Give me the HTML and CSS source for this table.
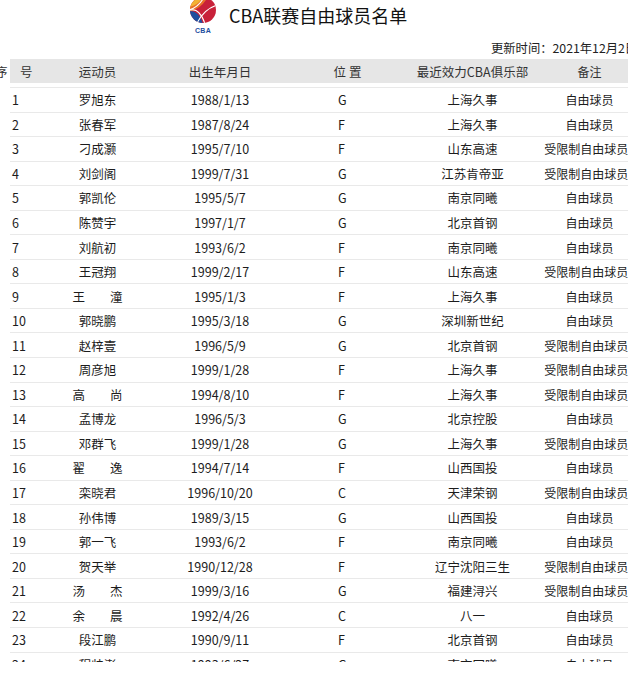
FILE: index.html
```html
<!DOCTYPE html>
<html lang="zh-CN">
<head>
<meta charset="utf-8">
<title>CBA联赛自由球员名单</title>
<link rel="stylesheet" href="styles.css">
</head>
<body>
<div class="page">
  <header class="title-bar">
    <svg class="logo" width="28" height="37" viewBox="0 0 28 37">
      <defs>
        <clipPath id="ball"><circle cx="14" cy="12" r="13"/></clipPath>
      </defs>
      <g clip-path="url(#ball)">
        <rect x="0" y="-2" width="28" height="28" fill="#c8213a"/>
        <path d="M0 -2 H15 Q10 7 1 11 L0 11 Z" fill="#f2b233"/>
        <path d="M0 9 Q9 7 14 0 L17 2 Q11 11 0 14 Z" fill="#e8702a"/>
        <path d="M0 13 Q10 12 14 26 H0 Z" fill="#1f4e9e"/>
        <path d="M1 12 Q11 10 16 26" fill="none" stroke="#fff" stroke-width="1.1"/>
        <path d="M15 -1 Q10 9 0 12" fill="none" stroke="#fff" stroke-width="1.1"/>
        <path d="M8 25 Q15 11 28 7" fill="none" stroke="#fff" stroke-width="1.1"/>
      </g>
      <text x="14" y="35" text-anchor="middle" class="logo-text">CBA</text>
    </svg>
    <h1 class="title">CBA联赛自由球员名单</h1>
  </header>
  <div class="update">更新时间：2021年12月2日</div>
  <div class="table">
    <div class="row head">
      <div class="c c-no"><span class="no-head">序　号</span></div>
      <div class="c c-name">运动员</div>
      <div class="c c-date">出生年月日</div>
      <div class="c c-pos-h">位 置</div>
      <div class="c c-club">最近效力CBA俱乐部</div>
      <div class="c c-note">备注</div>
    </div>
    <div class="body">
      <div class="row"><div class="c c-no">1</div><div class="c c-name">罗旭东</div><div class="c c-date">1988/1/13</div><div class="c c-pos">G</div><div class="c c-club">上海久事</div><div class="c c-note">自由球员</div></div>
      <div class="row"><div class="c c-no">2</div><div class="c c-name">张春军</div><div class="c c-date">1987/8/24</div><div class="c c-pos">F</div><div class="c c-club">上海久事</div><div class="c c-note">自由球员</div></div>
      <div class="row"><div class="c c-no">3</div><div class="c c-name">刁成灏</div><div class="c c-date">1995/7/10</div><div class="c c-pos">F</div><div class="c c-club">山东高速</div><div class="c c-note">受限制自由球员1</div></div>
      <div class="row"><div class="c c-no">4</div><div class="c c-name">刘剑阁</div><div class="c c-date">1999/7/31</div><div class="c c-pos">G</div><div class="c c-club">江苏肯帝亚</div><div class="c c-note">受限制自由球员1</div></div>
      <div class="row"><div class="c c-no">5</div><div class="c c-name">郭凯伦</div><div class="c c-date">1995/5/7</div><div class="c c-pos">G</div><div class="c c-club">南京同曦</div><div class="c c-note">自由球员</div></div>
      <div class="row"><div class="c c-no">6</div><div class="c c-name">陈赞宇</div><div class="c c-date">1997/1/7</div><div class="c c-pos">G</div><div class="c c-club">北京首钢</div><div class="c c-note">自由球员</div></div>
      <div class="row"><div class="c c-no">7</div><div class="c c-name">刘航初</div><div class="c c-date">1993/6/2</div><div class="c c-pos">F</div><div class="c c-club">南京同曦</div><div class="c c-note">自由球员</div></div>
      <div class="row"><div class="c c-no">8</div><div class="c c-name">王冠翔</div><div class="c c-date">1999/2/17</div><div class="c c-pos">F</div><div class="c c-club">山东高速</div><div class="c c-note">受限制自由球员1</div></div>
      <div class="row"><div class="c c-no">9</div><div class="c c-name">王　　潼</div><div class="c c-date">1995/1/3</div><div class="c c-pos">F</div><div class="c c-club">上海久事</div><div class="c c-note">自由球员</div></div>
      <div class="row"><div class="c c-no">10</div><div class="c c-name">郭晓鹏</div><div class="c c-date">1995/3/18</div><div class="c c-pos">G</div><div class="c c-club">深圳新世纪</div><div class="c c-note">自由球员</div></div>
      <div class="row"><div class="c c-no">11</div><div class="c c-name">赵梓壹</div><div class="c c-date">1996/5/9</div><div class="c c-pos">G</div><div class="c c-club">北京首钢</div><div class="c c-note">受限制自由球员1</div></div>
      <div class="row"><div class="c c-no">12</div><div class="c c-name">周彦旭</div><div class="c c-date">1999/1/28</div><div class="c c-pos">F</div><div class="c c-club">上海久事</div><div class="c c-note">受限制自由球员1</div></div>
      <div class="row"><div class="c c-no">13</div><div class="c c-name">高　　尚</div><div class="c c-date">1994/8/10</div><div class="c c-pos">F</div><div class="c c-club">上海久事</div><div class="c c-note">受限制自由球员1</div></div>
      <div class="row"><div class="c c-no">14</div><div class="c c-name">孟博龙</div><div class="c c-date">1996/5/3</div><div class="c c-pos">G</div><div class="c c-club">北京控股</div><div class="c c-note">自由球员</div></div>
      <div class="row"><div class="c c-no">15</div><div class="c c-name">邓群飞</div><div class="c c-date">1999/1/28</div><div class="c c-pos">G</div><div class="c c-club">上海久事</div><div class="c c-note">受限制自由球员1</div></div>
      <div class="row"><div class="c c-no">16</div><div class="c c-name">翟　　逸</div><div class="c c-date">1994/7/14</div><div class="c c-pos">F</div><div class="c c-club">山西国投</div><div class="c c-note">自由球员</div></div>
      <div class="row"><div class="c c-no">17</div><div class="c c-name">栾晓君</div><div class="c c-date">1996/10/20</div><div class="c c-pos">C</div><div class="c c-club">天津荣钢</div><div class="c c-note">受限制自由球员1</div></div>
      <div class="row"><div class="c c-no">18</div><div class="c c-name">孙伟博</div><div class="c c-date">1989/3/15</div><div class="c c-pos">G</div><div class="c c-club">山西国投</div><div class="c c-note">自由球员</div></div>
      <div class="row"><div class="c c-no">19</div><div class="c c-name">郭一飞</div><div class="c c-date">1993/6/2</div><div class="c c-pos">F</div><div class="c c-club">南京同曦</div><div class="c c-note">自由球员</div></div>
      <div class="row"><div class="c c-no">20</div><div class="c c-name">贺天举</div><div class="c c-date">1990/12/28</div><div class="c c-pos">F</div><div class="c c-club">辽宁沈阳三生</div><div class="c c-note">受限制自由球员1</div></div>
      <div class="row"><div class="c c-no">21</div><div class="c c-name">汤　　杰</div><div class="c c-date">1999/3/16</div><div class="c c-pos">G</div><div class="c c-club">福建浔兴</div><div class="c c-note">受限制自由球员1</div></div>
      <div class="row"><div class="c c-no">22</div><div class="c c-name">余　　晨</div><div class="c c-date">1992/4/26</div><div class="c c-pos">C</div><div class="c c-club">八一</div><div class="c c-note">自由球员</div></div>
      <div class="row"><div class="c c-no">23</div><div class="c c-name">段江鹏</div><div class="c c-date">1990/9/11</div><div class="c c-pos">F</div><div class="c c-club">北京首钢</div><div class="c c-note">自由球员</div></div>
      <div class="row"><div class="c c-no">24</div><div class="c c-name">程帅澎</div><div class="c c-date">1993/6/27</div><div class="c c-pos">G</div><div class="c c-club">南京同曦</div><div class="c c-note">自由球员</div></div>
    </div>
  </div>
</div>
</body>
</html>
```

FILE: styles.css
```css
html, body {
  margin: 0;
  padding: 0;
  background: #ffffff;
}

body {
  font-family: "Noto Sans CJK SC", "Noto Sans", sans-serif;
  color: #1c1c1c;
}

.page {
  width: 628px;
  height: 662px;
  overflow: hidden;
}

.title-bar {
  display: flex;
  align-items: flex-start;
  padding-left: 189px;
  height: 37px;
}

.logo {
  display: block;
  margin-top: -2px;
}

.logo-text {
  font-family: "Liberation Sans", sans-serif;
  font-size: 7px;
  font-weight: bold;
  fill: #1f4e9e;
  letter-spacing: 0.3px;
}

.title {
  margin: 0 0 0 12px;
  font-size: 18px;
  font-weight: normal;
  line-height: 30px;
  color: #111;
  white-space: nowrap;
}

.update {
  margin-left: 491px;
  font-size: 12.3px;
  line-height: 22px;
  white-space: nowrap;
  color: #222;
}

.table {
  margin-left: 10px;
  width: 621px;
}

.row {
  display: grid;
  grid-template-columns: 40px 95px 150px 105px 145px 86px;
  box-sizing: border-box;
  height: 24.55px;
  border-bottom: 1px solid #e9e9e9;
  font-size: 12.5px;
}

.row.head {
  height: 24px;
  background: #e6e6e6;
  border-bottom: none;
  margin-bottom: 4px;
  color: #333;
}

.body {
  border-top: 1px solid #e9e9e9;
}

.c {
  display: flex;
  align-items: center;
  justify-content: center;
  white-space: nowrap;
}

.c-no {
  justify-content: flex-start;
  padding-left: 2px;
}

.no-head {
  margin-left: -17px;
}

.c-pos {
  justify-content: flex-start;
  padding-left: 43px;
}

.c-note {
  font-size: 12px;
  padding-left: 3px;
}
```
